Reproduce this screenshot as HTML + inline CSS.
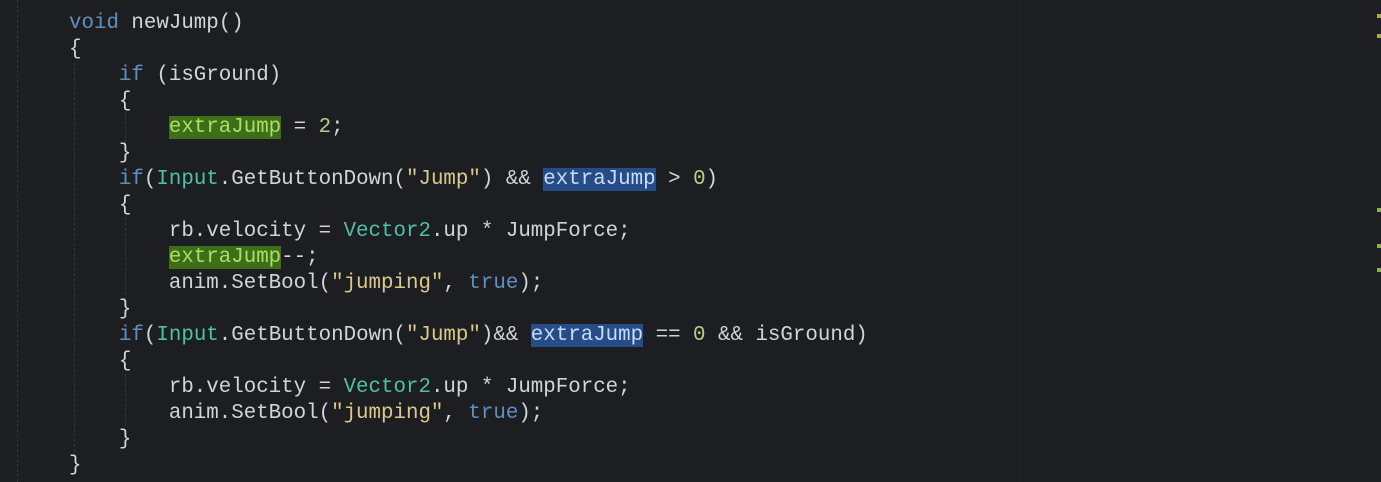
<html><head><style>
body{margin:0;width:1381px;height:482px;background:#1d1e22;overflow:hidden;position:relative;font-family:"Liberation Mono",monospace;}
pre{position:absolute;left:69px;top:11px;margin:0;font-size:20.8px;line-height:26px;color:#d2d4d6;font-family:"Liberation Mono",monospace;}
.k{color:#5f8fc0}.t{color:#4ec0a8}.s{color:#d9c98a}.n{color:#b5d08a}
.g{background:#3f6e1a;color:#a8e060}.b{background:#264d88;color:#c8dcff}
.v{position:absolute;border-left:1px dashed #34363b;}
</style></head><body>
<div class="v" style="left:17px;top:0;height:482px"></div>
<div class="v" style="left:74px;top:62px;height:390px"></div>
<div class="v" style="left:125px;top:112px;height:36px"></div>
<div class="v" style="left:125px;top:218px;height:82px"></div>
<div class="v" style="left:125px;top:374px;height:52px"></div>
<div style="position:absolute;left:1020px;top:0;width:1px;height:482px;background:#24262a"></div>
<pre><span class="k">void</span> newJump()
{
    <span class="k">if</span> (isGround)
    {
        <span class="g">extraJump</span> = <span class="n">2</span>;
    }
    <span class="k">if</span>(<span class="t">Input</span>.GetButtonDown(<span class="s">"Jump"</span>) &amp;&amp; <span class="b">extraJump</span> &gt; <span class="n">0</span>)
    {
        rb.velocity = <span class="t">Vector2</span>.up * JumpForce;
        <span class="g">extraJump</span>--;
        anim.SetBool(<span class="s">"jumping"</span>, <span class="k">true</span>);
    }
    <span class="k">if</span>(<span class="t">Input</span>.GetButtonDown(<span class="s">"Jump"</span>)&amp;&amp; <span class="b">extraJump</span> == <span class="n">0</span> &amp;&amp; isGround)
    {
        rb.velocity = <span class="t">Vector2</span>.up * JumpForce;
        anim.SetBool(<span class="s">"jumping"</span>, <span class="k">true</span>);
    }
}</pre>
<div style="position:absolute;left:1377px;top:14px;width:4px;height:4px;background:#a8b040"></div>
<div style="position:absolute;left:1377px;top:34px;width:4px;height:4px;background:#a8b040"></div>
<div style="position:absolute;left:1377px;top:208px;width:4px;height:4px;background:#8ab040"></div>
<div style="position:absolute;left:1377px;top:244px;width:4px;height:4px;background:#8ab040"></div>
<div style="position:absolute;left:1377px;top:268px;width:4px;height:4px;background:#8ab040"></div>
</body></html>
